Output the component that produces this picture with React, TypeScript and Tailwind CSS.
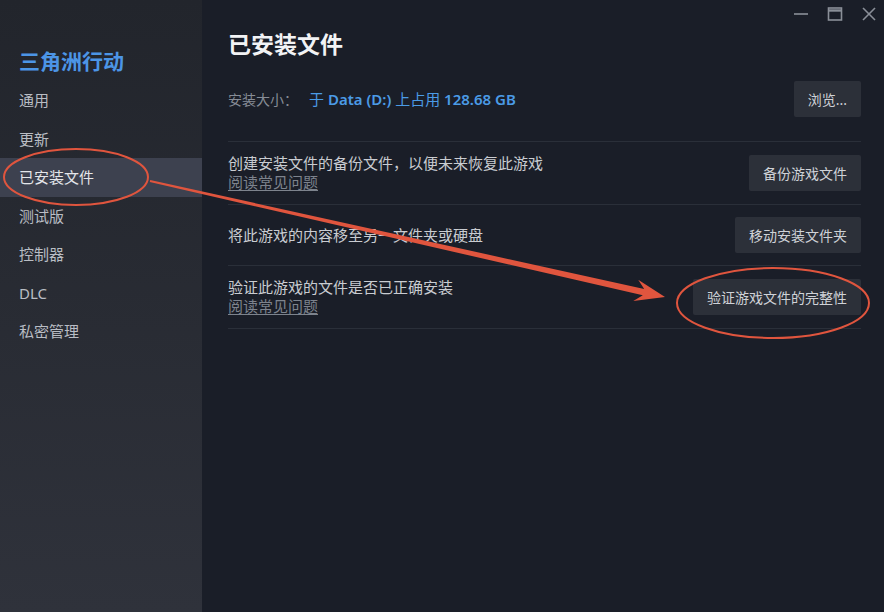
import React from 'react'

const navItems = ['通用', '更新', '已安装文件', '测试版', '控制器', 'DLC', '私密管理']

function taperedArrow() {
  const sx = 150
  const sy = 181
  const tx = 665
  const ty = 297
  const dx = tx - sx
  const dy = ty - sy
  const len = Math.hypot(dx, dy)
  const ux = dx / len
  const uy = dy / len
  const nx = -uy
  const ny = ux
  const bx = tx - 30 * ux
  const by = ty - 30 * uy
  const nkx = tx - 22 * ux
  const nky = ty - 22 * uy
  const p = (x: number, y: number) => `${x.toFixed(1)},${y.toFixed(1)}`
  return [
    p(sx + 1 * nx, sy + 1 * ny),
    p(nkx + 3.2 * nx, nky + 3.2 * ny),
    p(bx + 11 * nx, by + 11 * ny),
    p(tx, ty),
    p(bx - 11 * nx, by - 11 * ny),
    p(nkx - 3.2 * nx, nky - 3.2 * ny),
    p(sx - 1 * nx, sy - 1 * ny),
  ].join(' ')
}

function Row({
  text,
  link,
  button,
}: {
  text: string
  link?: boolean
  button: string
}) {
  return (
    <div className="flex items-center justify-between border-t border-[#2a2f39] py-3">
      <div className="flex flex-col">
        <span className="text-[15px] leading-[19px] text-[#c9ccd1]">{text}</span>
        {link && (
          <span className="text-[15px] leading-[19px] text-[#7d838d] underline underline-offset-2">
            阅读常见问题
          </span>
        )}
      </div>
      <button className="h-9 rounded-[2px] bg-[#2c3039] px-[14px] text-[14px] text-[#cfd2d7]">
        {button}
      </button>
    </div>
  )
}

export default function App() {
  return (
    <div
      className="relative flex h-[612px] w-[884px] overflow-hidden bg-[#1a1e28]"
      style={{ fontFamily: '"Noto Sans", "Noto Sans CJK SC", sans-serif' }}
    >
      {/* Sidebar */}
      <aside className="flex w-[202px] shrink-0 flex-col bg-gradient-to-b from-[#22252c] to-[#2f323b] pt-[47px]">
        <div className="pl-[19px] text-[21px] font-bold leading-[28px] text-[#4c95e6]">三角洲行动</div>
        <nav className="mt-[6px] flex flex-col">
          {navItems.map((item) => (
            <div
              key={item}
              className={
                item === '已安装文件'
                  ? 'flex h-[38.5px] items-center bg-[#3d414f] pl-[19px] text-[15px] text-[#e4e6ea]'
                  : 'flex h-[38.5px] items-center pl-[19px] text-[15px] text-[#b9bdc4]'
              }
            >
              {item}
            </div>
          ))}
        </nav>
      </aside>

      {/* Main */}
      <main className="flex flex-1 flex-col pl-[26px] pr-[23px]">
        <div className="-mr-[23px] flex h-[28px] items-center justify-end gap-[18px] pr-[7px]">
          <svg width="16" height="16" viewBox="0 0 16 16" fill="none" stroke="#8a8f98" strokeWidth="1.6">
            <line x1="1" y1="8" x2="15" y2="8" />
          </svg>
          <svg width="16" height="16" viewBox="0 0 16 16" fill="none" stroke="#8a8f98" strokeWidth="1.6">
            <rect x="1.5" y="2" width="13" height="12" />
            <line x1="1.5" y1="4.5" x2="14.5" y2="4.5" strokeWidth="2.4" />
          </svg>
          <svg width="16" height="16" viewBox="0 0 16 16" fill="none" stroke="#8a8f98" strokeWidth="1.6">
            <line x1="2" y1="2" x2="14" y2="14" />
            <line x1="14" y1="2" x2="2" y2="14" />
          </svg>
        </div>

        <h1 className="mt-[1px] text-[23px] font-bold leading-[31px] text-[#f2f3f5]">已安装文件</h1>

        <div className="mt-[21px] flex items-center justify-between pb-6">
          <div className="flex items-center">
            <span className="text-[14px] text-[#868c96]">安装大小：</span>
            <span className="ml-[11px] text-[15px] text-[#4b9be6]">
              于 <span className="font-semibold">Data (D:)</span> 上占用{' '}
              <span className="font-semibold">128.68 GB</span>
            </span>
          </div>
          <button className="h-9 rounded-[2px] bg-[#2c3039] px-[14px] text-[14px] text-[#cfd2d7]">浏览...</button>
        </div>

        <Row text="创建安装文件的备份文件，以便未来恢复此游戏" link button="备份游戏文件" />
        <Row text="将此游戏的内容移至另一文件夹或硬盘" button="移动安装文件夹" />
        <Row text="验证此游戏的文件是否已正确安装" link button="验证游戏文件的完整性" />
        <div className="border-t border-[#2a2f39]" />
      </main>

      {/* Annotations */}
      <svg className="pointer-events-none absolute inset-0" width="884" height="612" viewBox="0 0 884 612">
        <ellipse cx="76" cy="177" rx="72" ry="28" fill="none" stroke="#e0553e" strokeWidth="2" />
        <ellipse cx="773" cy="303" rx="96" ry="35" fill="none" stroke="#e0553e" strokeWidth="2" />
        <polygon points={taperedArrow()} fill="#e0553e" />
      </svg>
    </div>
  )
}
